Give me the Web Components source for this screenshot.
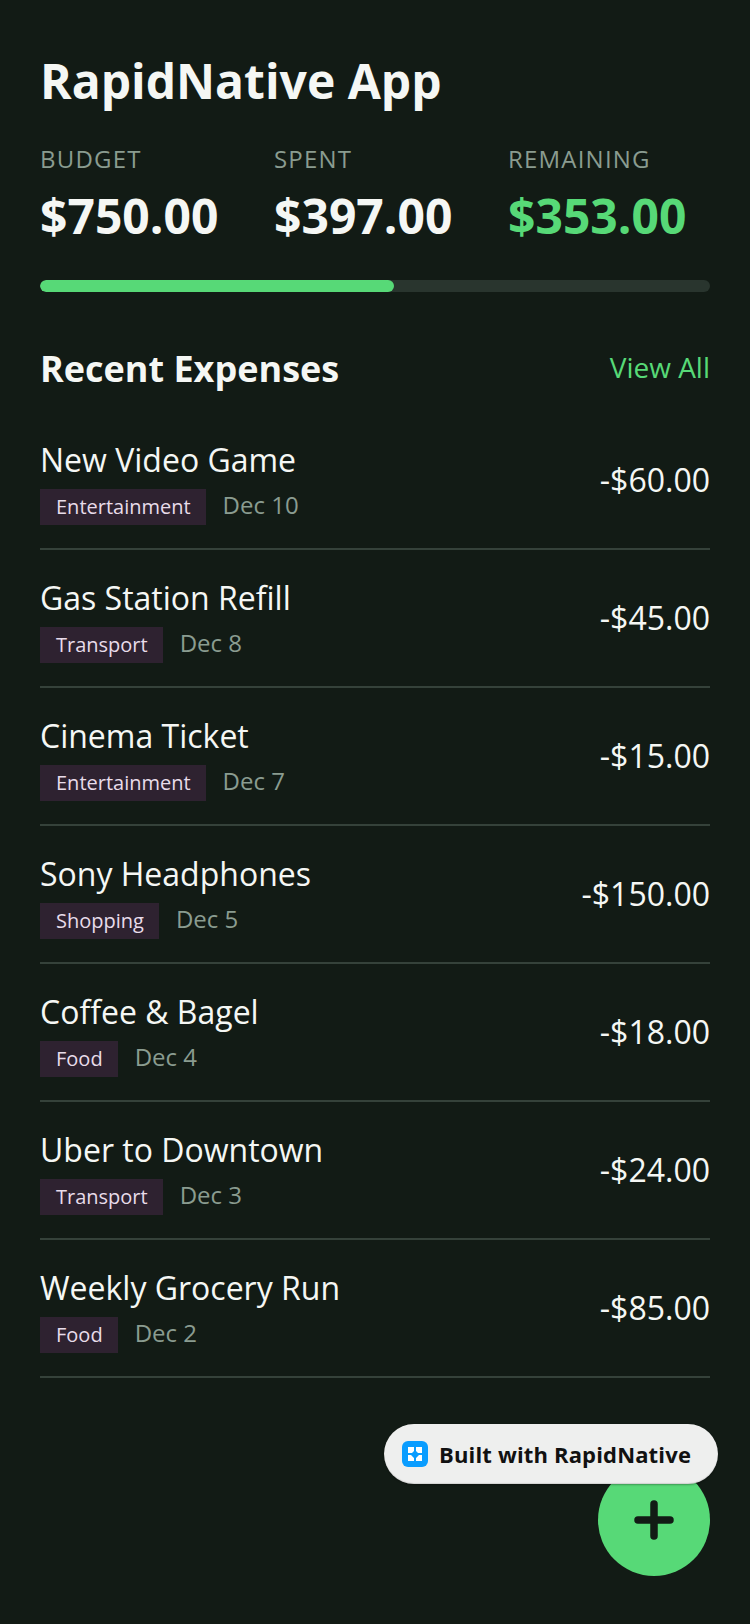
<!DOCTYPE html>
<html><head><meta charset="utf-8"><style>
html,body{margin:0;padding:0;background:#121b15;}
body{width:750px;height:1624px;overflow:hidden;font-family:"Open Sans",sans-serif;}
</style></head><body>
<app-screen>
<budget-header></budget-header>
<section-head></section-head>
<expense-row name="New Video Game" tag="Entertainment" date="Dec 10" amount="-$60.00"></expense-row>
<expense-row name="Gas Station Refill" tag="Transport" date="Dec 8" amount="-$45.00"></expense-row>
<expense-row name="Cinema Ticket" tag="Entertainment" date="Dec 7" amount="-$15.00"></expense-row>
<expense-row name="Sony Headphones" tag="Shopping" date="Dec 5" amount="-$150.00"></expense-row>
<expense-row name="Coffee &amp; Bagel" tag="Food" date="Dec 4" amount="-$18.00"></expense-row>
<expense-row name="Uber to Downtown" tag="Transport" date="Dec 3" amount="-$24.00"></expense-row>
<expense-row name="Weekly Grocery Run" tag="Food" date="Dec 2" amount="-$85.00"></expense-row>
<add-fab></add-fab>
<built-badge></built-badge>
</app-screen>
<script>
function def(name,html,setup){
  customElements.define(name,class extends HTMLElement{
    constructor(){super();this.attachShadow({mode:'open'}).innerHTML=html;}
    connectedCallback(){if(setup)setup(this.shadowRoot,this);}
  });
}
def('app-screen',`<style>:host{display:block;position:relative;width:750px;height:1624px;box-sizing:border-box;padding:0 40px;background:#121b15;color:#f5f7f4;}</style><slot></slot>`);
def('budget-header',`<style>
:host{display:block;padding-top:48px}
h1{margin:0;font-size:48px;line-height:66px;font-weight:700;color:#f5f7f4}
.stats{display:grid;grid-template-columns:repeat(3,234px);margin-top:29px}
.l{font-size:24px;line-height:32px;letter-spacing:1.2px;color:#8a9c90}
.v{font-size:48px;line-height:66px;font-weight:700;margin-top:8px;color:#f5f7f4}
.g{color:#57d977}
.bar{height:12px;border-radius:6px;background:#29352e;margin-top:31px;overflow:hidden}
.fill{height:100%;width:52.9%;border-radius:6px;background:#57d977}
</style><h1>RapidNative App</h1>
<div class="stats">
<div><div class="l">BUDGET</div><div class="v">$750.00</div></div>
<div><div class="l">SPENT</div><div class="v">$397.00</div></div>
<div><div class="l">REMAINING</div><div class="v g">$353.00</div></div>
</div><div class="bar"><div class="fill"></div></div>`);
def('section-head',`<style>
:host{display:flex;justify-content:space-between;align-items:center;margin-top:48px;height:72px;box-sizing:border-box;padding-bottom:15px}
.t{font-size:36px;font-weight:700;color:#f5f7f4}
.a{font-size:28px;color:#57d977;padding-bottom:4px}
</style><span class="t">Recent Expenses</span><span class="a">View All</span>`);
def('expense-row',`<style>
:host{display:flex;justify-content:space-between;align-items:center;height:138px;box-sizing:border-box;border-bottom:2px solid #35423a;padding-bottom:2px}
.l{padding-top:6px}
.n{font-size:32px;line-height:44px;color:#f5f7f4}
.m{display:flex;align-items:center;gap:16.5px;margin-top:5.5px}
.tag{background:#2e2230;color:#e8dcea;font-size:20px;line-height:36px;padding:0 15.5px 0 16px}
.d{font-size:24px;color:#8a9c90;padding-bottom:5px}
.amt{font-size:32px;color:#f5f7f4}
</style><div class="l"><div class="n"></div><div class="m"><span class="tag"></span><span class="d"></span></div></div><div class="amt"></div>`,
(s,h)=>{s.querySelector('.n').textContent=h.getAttribute('name');s.querySelector('.tag').textContent=h.getAttribute('tag');s.querySelector('.d').textContent=h.getAttribute('date');s.querySelector('.amt').textContent=h.getAttribute('amount');});
def('add-fab',`<style>
:host{position:absolute;left:598px;top:1464px;width:112px;height:112px;border-radius:50%;background:#57d977;display:flex;align-items:center;justify-content:center}
</style><svg width="40" height="40" viewBox="0 0 40 40"><path d="M20 4V36M4 20H36" stroke="#121b15" stroke-width="7.5" stroke-linecap="round" fill="none"/></svg>`);
def('built-badge',`<style>
:host{position:absolute;left:384px;top:1424px;width:334px;height:60px;box-sizing:border-box;border-radius:30px;background:#eeefee;display:flex;align-items:center;padding-left:18px;gap:11px;box-shadow:0 1px 2px rgba(0,0,0,.3),inset 0 -1px 1px rgba(0,0,0,.12)}
.t{font-size:22px;font-weight:700;color:#111;white-space:nowrap;letter-spacing:.16px}
svg{flex:none}
</style><svg width="26" height="26" viewBox="0 0 26 26"><rect width="26" height="26" rx="6" fill="#0a9dff"/><path d="M6 6H12V10L10 12H6ZM14 6H20V12H16L14 10ZM6 14H9L12 17V20H6ZM17 14H20V20H14V17Z" fill="#fff"/></svg><span class="t">Built with RapidNative</span>`);
</script></body></html>
